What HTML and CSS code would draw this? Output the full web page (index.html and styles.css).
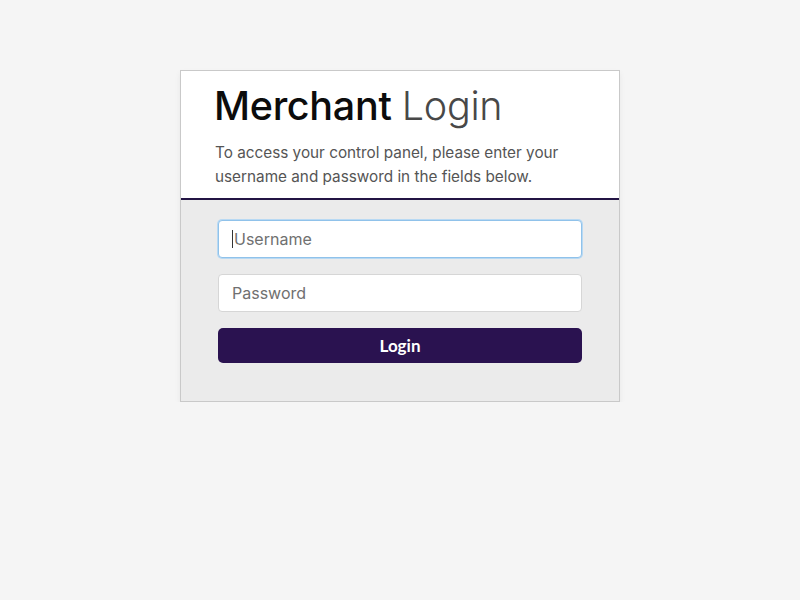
FILE: index.html
```html
<!DOCTYPE html>
<html>
<head>
<meta charset="utf-8">
<link rel="stylesheet" href="styles.css">
</head>
<body>
<div class="page">
  <div class="card">
    <div class="card-head">
      <h1 class="title"><span class="strong">Merchant</span> <span class="light">Login</span></h1>
      <p class="intro">To access your control panel, please enter your username and password in the fields below.</p>
    </div>
    <form class="card-body">
      <div class="field focused"><span class="caret"></span><span class="ph">Username</span></div>
      <div class="field"><span class="ph">Password</span></div>
      <button type="button" class="btn">Login</button>
    </form>
  </div>
</div>
</body>
</html>
```
FILE: styles.css
```css
html, body {
  margin: 0;
  padding: 0;
  background: #f5f5f5;
  font-family: "Inter", "Noto Sans", sans-serif;
}
.page {
  display: flex;
  justify-content: center;
  padding-top: 70px;
}
.card {
  width: 438px;
  border: 1px solid #c9c9c9;
  background: #ebebeb;
  box-shadow: 0 3px 6px rgba(0,0,0,0.06);
}
.card-head {
  background: #fff;
  border-bottom: 2px solid #231444;
  padding: 10px 30px 9px 33px;
}
.title {
  margin: 0;
  font-size: 39.5px;
  line-height: 50px;
  font-weight: 500;
  letter-spacing: -0.3px;
}
.strong { color: #0c0c0c; }
.light { color: #484848; font-weight: 300; }
.intro {
  margin: 10px 0 0 1px;
  font-size: 15.3px;
  line-height: 24px;
  color: #555;
}
.card-body {
  display: flex;
  flex-direction: column;
  gap: 16px;
  padding: 20px 37px 38px 37px;
  margin: 0;
}
.field {
  height: 36px;
  background: #fff;
  border: 1px solid #d6d6d6;
  border-radius: 4px;
  display: flex;
  align-items: center;
  padding-left: 13px;
  font-size: 16px;
  color: #707070;
}
.field.focused {
  border-color: #90c2ea;
  box-shadow: 0 0 0 1px #b8d9f3;
}
.caret {
  width: 1px;
  height: 18px;
  background: #333;
  margin-right: 1px;
}
.btn {
  height: 35px;
  border: none;
  border-radius: 5px;
  background: #2a1250;
  color: #fff;
  font-family: "Lato", sans-serif;
  font-weight: 700;
  font-size: 17px;
  cursor: pointer;
}
```
